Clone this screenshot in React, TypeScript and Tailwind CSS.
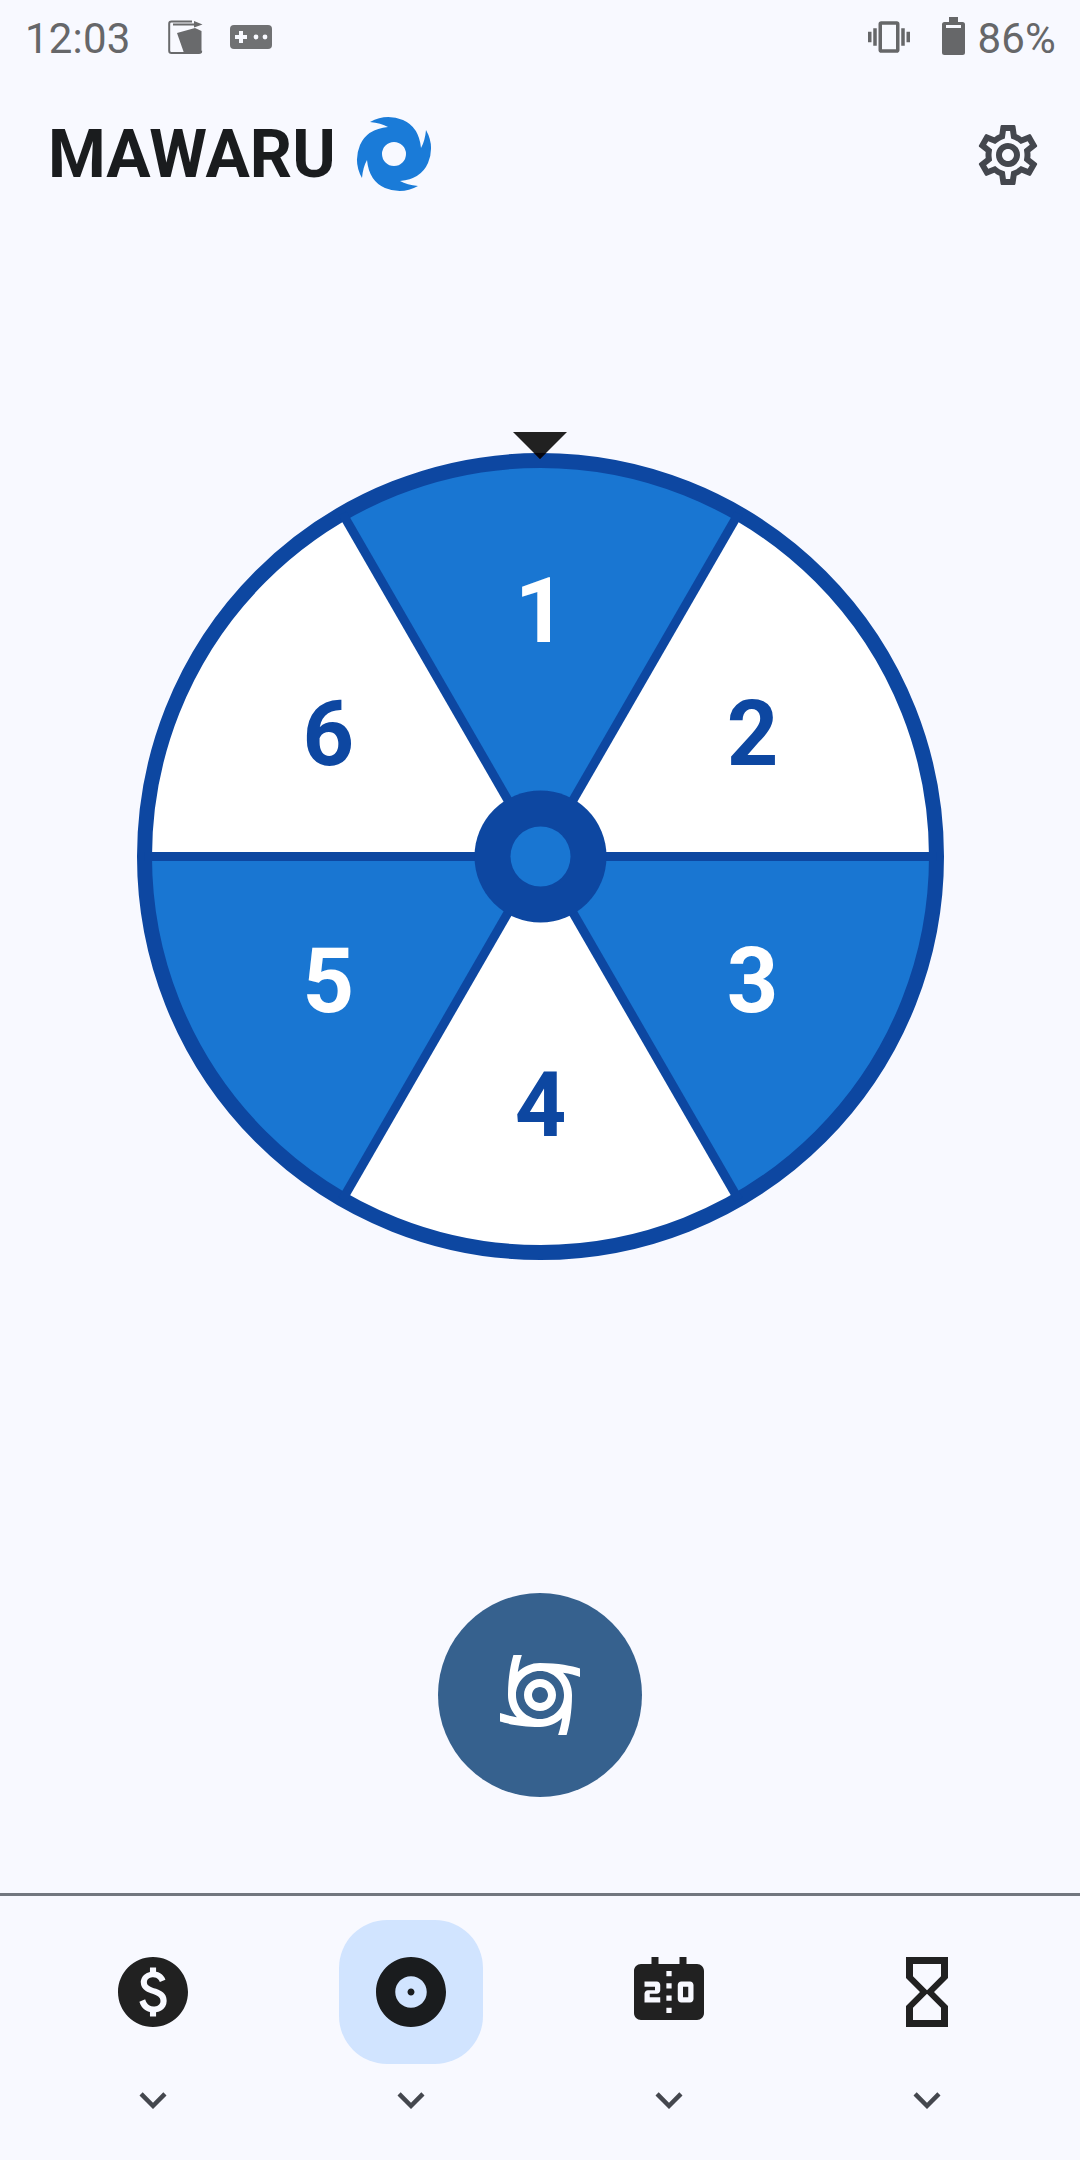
import React from "react";
import { MdCyclone, MdPaid, MdAlbum, MdScoreboard, MdHourglassEmpty, MdExpandMore, MdVibration, MdOutlineSettings } from "react-icons/md";

const R = 396;
const dx = 198;
const dy = 342.94;
const C = 403.5;
const BLUE = "#1976d2";
const DARK = "#0d47a1";

function pt(deg: number) {
  const a = (deg * Math.PI) / 180;
  return `${C + R * Math.cos(a)} ${C + R * Math.sin(a)}`;
}

const wedges = [
  { from: -120, to: -60, fill: BLUE },
  { from: -60, to: 0, fill: "#ffffff" },
  { from: 0, to: 60, fill: BLUE },
  { from: 60, to: 120, fill: "#ffffff" },
  { from: 120, to: 180, fill: BLUE },
  { from: 180, to: 240, fill: "#ffffff" },
];

const labels = [
  { t: "1", a: -90, c: "#ffffff" },
  { t: "2", a: -30, c: DARK },
  { t: "3", a: 30, c: "#ffffff" },
  { t: "4", a: 90, c: DARK },
  { t: "5", a: 150, c: "#ffffff" },
  { t: "6", a: 210, c: DARK },
];

function Wheel() {
  return (
    <div className="relative w-[807px] h-[807px]">
      <svg width="807" height="807" viewBox="0 0 807 807" className="block">
        {wedges.map((w, i) => (
          <path key={i} d={`M${C} ${C} L${pt(w.from)} A${R} ${R} 0 0 1 ${pt(w.to)} Z`} fill={w.fill} />
        ))}
        <circle cx={C} cy={C} r={R} fill="none" stroke={DARK} strokeWidth="15" />
        <g stroke={DARK} strokeWidth="9">
          <line x1={C - R} y1={C} x2={C + R} y2={C} />
          <line x1={C - dx} y1={C - dy} x2={C + dx} y2={C + dy} />
          <line x1={C + dx} y1={C - dy} x2={C - dx} y2={C + dy} />
        </g>
        {labels.map((l) => {
          const a = (l.a * Math.PI) / 180;
          return (
            <text
              key={l.t}
              x={C + (l.a === 90 || l.a === -90 ? 247 : 245) * Math.cos(a)}
              y={C + 247 * Math.sin(a) + 32}
              textAnchor="middle"
              fill={l.c}
              fontSize="90"
              fontWeight="700"
              fontFamily="Roboto, sans-serif"
            >
              {l.t}
            </text>
          );
        })}
        <circle cx={C} cy={C} r="66" fill={DARK} />
        <circle cx={C} cy={C} r="30" fill={BLUE} />
      </svg>
      <svg width="54" height="28" viewBox="0 0 54 28" className="absolute left-[376px] top-[-21px]">
        <polygon points="0,0 54,0 27,27" fill="#212121" />
        <polygon points="21,21 33,21 27,27" fill="#06060f" />
      </svg>
    </div>
  );
}

function Hurricane() {
  return (
    <svg width="76" height="80" viewBox="-38 -40 76 80" className="block">
      <path
        fillRule="evenodd"
        fill="#1a7bd8"
        d="M-6 -27 Q-13 -31 -24 -32 Q-8 -41 9 -34 Q25 -27 27 -6 Q31 -13 32 -24 Q41 -8 34 9 Q27 25 6 27 Q13 31 24 32 Q8 41 -9 34 Q-25 27 -27 6 Q-31 13 -32 24 Q-41 8 -34 -9 Q-27 -25 -6 -27 Z M12 0 A12 12 0 1 0 -12 0 A12 12 0 1 0 12 0 Z"
      />
    </svg>
  );
}

function CardIcon() {
  return (
    <svg width="35" height="34" viewBox="0 0 35 34" className="block">
      <path d="M24 1.5H3.5Q1.2 1.5 1.2 3.8V30.7Q1.2 33 3.5 33H31Q33.2 33 33.2 30.8" fill="none" stroke="#696a6c" strokeWidth="2" />
      <path d="M5 3.4H26V1L34.5 4.6L26 7.4V5.4H5Z" fill="#696a6c" />
      <path d="M9 13L27 8L33.5 11V33H16Z" fill="#696a6c" />
    </svg>
  );
}

function PadIcon() {
  return (
    <svg width="42" height="24" viewBox="0 0 42 24" className="block">
      <rect width="42" height="24" rx="4" fill="#707173" />
      <path d="M9 6H13V10H17V14H13V18H9V14H5V10H9Z" fill="#f8f9ff" />
      <circle cx="26" cy="12" r="2.4" fill="#f8f9ff" />
      <circle cx="35" cy="12" r="2.4" fill="#f8f9ff" />
    </svg>
  );
}

function BatteryIcon() {
  return (
    <svg width="23" height="38" viewBox="0 0 23 38" className="block">
      <path d="M7 0H16V5H20.5Q23 5 23 7.5V35.5Q23 38 20.5 38H2.5Q0 38 0 35.5V7.5Q0 5 2.5 5H7Z" fill="#666769" />
      <rect x="4" y="8" width="15" height="3" fill="#f8f9ff" />
    </svg>
  );
}

function NavItem({ icon, active }: { icon: React.ReactNode; active?: boolean }) {
  return (
    <div className="flex flex-col items-center">
      <div className={`w-[144px] h-[144px] rounded-[48px] flex items-center justify-center ${active ? "bg-[#d1e4ff]" : ""}`}>{icon}</div>
      <MdExpandMore className="mt-[9px] text-[#44474e]" size={54} />
    </div>
  );
}

export default function App() {
  return (
    <div className="w-[1080px] h-[2160px] bg-[#f8f9ff] flex flex-col overflow-hidden font-['Roboto',sans-serif]">
      <div className="h-[74px] flex items-center pl-[25px] pr-[24px] text-[#666769] text-[42px] tracking-[0.2px] shrink-0">
        <span className="w-[143px] pt-[2px]">12:03</span>
        <CardIcon />
        <span className="ml-[27px]"><PadIcon /></span>
        <span className="ml-auto"><MdVibration size={42} className="text-[#666769]" /></span>
        <span className="ml-[32px] -mt-[3px]"><BatteryIcon /></span>
        <span className="ml-[12px] pt-[2px]">86%</span>
      </div>
      <div className="h-[162px] flex items-center pl-[48px] pr-[36px] shrink-0">
        <span className="text-[#1a1c1e] text-[66px] font-bold leading-none">MAWARU</span>
        <span className="ml-[20px] -mt-[2px]"><Hurricane /></span>
        <MdOutlineSettings size={72} className="ml-auto text-[#44474e]" />
      </div>
      <div className="flex justify-center pt-[217px] shrink-0">
        <Wheel />
      </div>
      <div className="flex justify-center pt-[333px] shrink-0">
        <div className="w-[204px] h-[204px] rounded-full bg-[#36618e] flex items-center justify-center">
          <MdCyclone size={96} className="text-white" />
        </div>
      </div>
      <div className="mt-[96px] border-t-[3px] border-[#72777f] grid grid-cols-4 px-6 pt-[24px] shrink-0">
        <NavItem icon={<MdPaid size={84} className="text-[#212121]" />} />
        <NavItem active icon={<MdAlbum size={84} className="text-[#1a1c1e]" />} />
        <NavItem icon={<MdScoreboard size={84} className="text-[#212121]" />} />
        <NavItem icon={<MdHourglassEmpty size={84} className="text-[#212121]" />} />
      </div>
    </div>
  );
}
